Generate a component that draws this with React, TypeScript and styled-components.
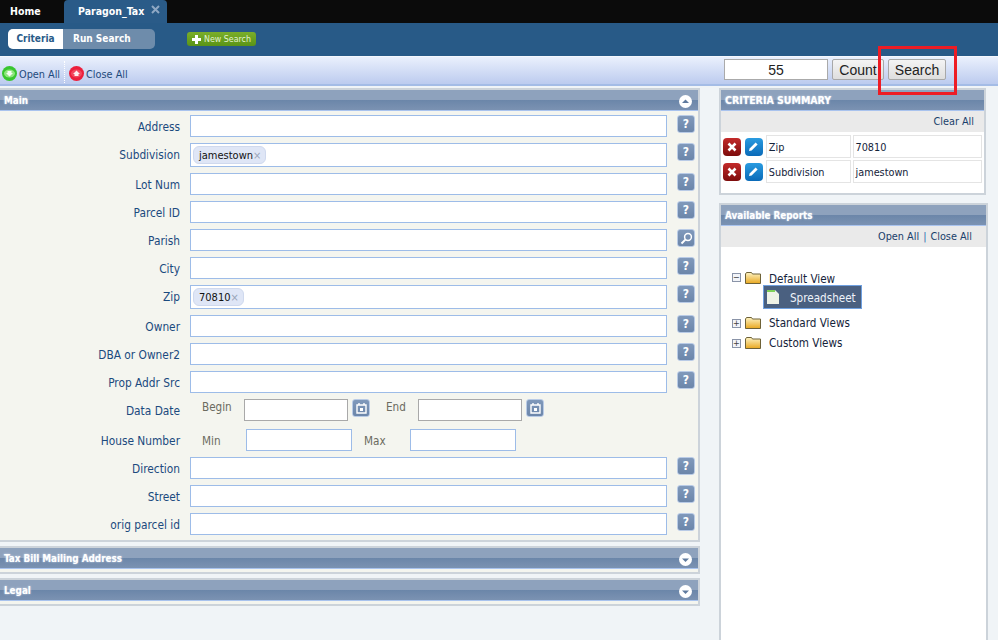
import styled, { createGlobalStyle } from "styled-components";

const Global = createGlobalStyle`
  html, body { margin: 0; padding: 0; height: 100%; }
  body {
    background: #f0f4f7;
    font-family: "DejaVu Sans Condensed", "DejaVu Sans", sans-serif;
    font-stretch: condensed;
    font-size: 11.6px;
    color: #0d3c6e;
    overflow: hidden;
  }
  * { box-sizing: border-box; }
`;

const Page = styled.div`
  position: relative;
  width: 998px;
  height: 640px;
  overflow: hidden;
`;

const TabBar = styled.div`
  display: flex;
  height: 23px;
  background: #0b0b0b;
  padding-left: 10px;
  font-size: 10.5px;
  font-weight: 700;
  color: #fff;
`;

const HomeTab = styled.div`
  width: 54px;
  line-height: 23px;
`;

const ActiveTab = styled.div`
  position: relative;
  width: 103px;
  padding-left: 14px;
  line-height: 23px;
  background: #2a5b88;
  border-radius: 4px 4px 0 0;
`;

const TabClose = styled.span`
  position: absolute;
  right: 7px;
  top: 5px;
  display: block;
  line-height: 0;
`;

const SubBar = styled.div`
  display: flex;
  align-items: flex-start;
  height: 33px;
  padding: 6px 0 0 8px;
  background: #285a87;
`;

const Pill = styled.div`
  display: flex;
  width: 147px;
  height: 20px;
  border-radius: 5px;
  overflow: hidden;
  background: #6e8cab;
  font-size: 10px;
  font-weight: 700;
  line-height: 20px;
`;

const PillOn = styled.div`
  width: 55px;
  text-align: center;
  background: #fff;
  color: #2a5b88;
`;

const PillOff = styled.div`
  padding-left: 10px;
  color: #fff;
`;

const NewSearch = styled.div`
  display: flex;
  align-items: center;
  gap: 3px;
  width: 69px;
  height: 14px;
  margin: 3px 0 0 32px;
  padding-left: 5px;
  border-radius: 3px;
  background: linear-gradient(#7aae2a, #5a9416);
  color: #e4f2d0;
  font-size: 8.8px;
  white-space: nowrap;
`;

const Toolbar = styled.div`
  display: flex;
  align-items: center;
  height: 30px;
  padding: 0 0 0 2px;
  background: linear-gradient(#eaf0fc, #bccbef);
  border-top: 1px solid #f4f7fd;
  border-bottom: 2px solid #a4bce6;
  font-size: 10.8px;
  color: #1e4a7c;
`;

const ToolLink = styled.div`
  display: flex;
  align-items: center;
  gap: 2px;
  margin-top: 6px;
`;

const ToolText = styled.span`
  padding-top: 2px;
`;

const ToolDivider = styled.div`
  width: 1px;
  height: 22px;
  margin: 3px 4px 0 4px;
  border-left: 1px dotted #fff;
`;

const Counter = styled.div`
  display: flex;
  gap: 4px;
  margin-left: auto;
  margin-right: 52px;
  margin-top: -2px;
  font-family: "Liberation Sans", Arial, sans-serif;
  font-stretch: normal;
`;

const CountBox = styled.div`
  width: 104px;
  height: 21px;
  background: #fff;
  border: 1px solid #aaa;
  color: #222;
  font-size: 14px;
  line-height: 20px;
  text-align: center;
`;

const GrayButton = styled.div<{ $w: number }>`
  width: ${({ $w }) => $w}px;
  height: 21px;
  border: 1px solid #a8a8a8;
  border-radius: 2px;
  background: linear-gradient(#f4f4f4, #dedede);
  color: #222;
  font-size: 14px;
  line-height: 20px;
  text-align: center;
`;

const Columns = styled.div`
  display: flex;
  align-items: flex-start;
  padding-top: 2px;
`;

const Left = styled.div`
  width: 700px;
`;

const Right = styled.div`
  width: 269px;
  margin-left: 19px;
`;

const Panel = styled.div`
  background: #f4f5ef;
  border: 2px solid #ccd3da;
  border-left: 0;
  margin-bottom: 4px;
`;

const Header = styled.div<{ $size?: number }>`
  display: flex;
  align-items: center;
  justify-content: space-between;
  height: 21px;
  padding: 0 6px 0 4px;
  background: linear-gradient(#8ea2bd 0, #8ea2bd 48%, #6b86a9 50%, #7b92b2 100%);
  border-bottom: 1px solid #a9c3ee;
  color: #fff;
  font-size: ${({ $size }) => $size ?? 9.8}px;
  font-weight: 700;
  text-shadow: 0 0 2px #dfe8f5;
`;

const Orb = styled.svg`
  display: block;
  margin-top: 3px;
`;

const MainBody = styled.div`
  display: flex;
  flex-direction: column;
  gap: 6px;
  padding: 4px 0 5px;
`;

const EmptyBody = styled.div`
  height: 3px;
`;

const Row = styled.div<{ $offset?: number }>`
  display: flex;
  align-items: center;
  margin-top: ${({ $offset }) => $offset ?? 0}px;
`;

const Label = styled.div<{ $tall?: boolean }>`
  width: 180px;
  margin-right: 10px;
  padding-top: ${({ $tall }) => ($tall ? 0 : 2)}px;
  font-size: 11.8px;
  text-align: right;
  color: #1b4a7e;
`;

const Field = styled.div<{ $tall?: boolean }>`
  display: flex;
  align-items: center;
  width: 477px;
  height: ${({ $tall }) => ($tall ? 24 : 22)}px;
  padding-left: 2px;
  background: #fff;
  border: 1px solid #9dbce8;
`;

const Chip = styled.div`
  display: flex;
  align-items: center;
  height: 18px;
  padding: 0 4px 0 5px;
  background: #dfe6f6;
  border: 1px solid #cfd9ee;
  border-radius: 6px;
  color: #111;
  font-size: 11px;
`;

const ChipX = styled.span`
  color: #9aa5b8;
  font-size: 11px;
`;

const TinyButton = styled.div`
  display: flex;
  align-items: center;
  justify-content: center;
  align-self: flex-start;
  width: 18px;
  height: 18px;
  margin-left: 10px;
  border: 1px solid #b9cbe6;
  border-radius: 3px;
  background: linear-gradient(#8099bb, #6c86aa);
  color: #fff;
  font-size: 12px;
  font-weight: 700;
`;

const CalButton = styled(TinyButton)`
  margin-left: 4px;
`;

const RangeLabel = styled.div<{ $w: number; $up?: boolean }>`
  width: ${({ $w }) => $w}px;
  margin-top: ${({ $up }) => ($up ? -6 : 2)}px;
  color: #6b6b60;
`;

const RangeInput = styled.div<{ $w: number; $gray?: boolean }>`
  width: ${({ $w }) => $w}px;
  height: 22px;
  background: #fff;
  border: 1px solid ${({ $gray }) => ($gray ? "#a9a9a9" : "#9dbce8")};
`;

const RangeGap = styled.div<{ $w: number }>`
  width: ${({ $w }) => $w}px;
`;

const RangeRow = styled(Row)`
  padding-left: 12px;
`;

const WhitePanel = styled.div<{ $w: number; $fill?: boolean }>`
  width: ${({ $w }) => $w}px;
  height: ${({ $fill }) => ($fill ? "440px" : "auto")};
  margin-bottom: 8px;
  background: #fff;
  border: 2px solid #ccd3da;
`;

const ActionBar = styled.div<{ $pad: number }>`
  display: flex;
  justify-content: flex-end;
  align-items: center;
  gap: 4px;
  height: 21px;
  padding-right: ${({ $pad }) => $pad}px;
  background: #eaeaea;
  color: #1a3f6b;
  font-size: 10.8px;
`;

const ActionSep = styled.span`
  color: #2a6cb0;
`;

const CriteriaList = styled.div`
  display: flex;
  flex-direction: column;
  gap: 2px;
  padding: 3px 0 10px 2px;
`;

const CriteriaRow = styled.div`
  display: flex;
  align-items: center;
`;

const IconTile = styled.div<{ $red?: boolean }>`
  display: flex;
  align-items: center;
  justify-content: center;
  width: 18px;
  height: 18px;
  margin-right: ${({ $red }) => ($red ? 4 : 3)}px;
  border-radius: 4px;
  background: ${({ $red }) =>
    $red ? "linear-gradient(#c32a2a, #7d0c0c)" : "linear-gradient(#2a9be0, #0a6ab8)"};
`;

const Cell = styled.div<{ $w: number }>`
  width: ${({ $w }) => $w}px;
  height: 23px;
  margin-right: 2px;
  padding-left: 2px;
  border: 1px solid #e4e4e4;
  color: #14233a;
  font-size: 10.8px;
  line-height: 23px;
`;

const Tree = styled.div`
  display: flex;
  flex-direction: column;
  padding: 23px 0 0 11px;
  color: #14233a;
`;

const TreeRow = styled.div<{ $offset?: number }>`
  display: flex;
  align-items: center;
  height: 20px;
  margin-top: ${({ $offset }) => $offset ?? 0}px;
`;

const TopTreeRow = styled(TreeRow)`
  height: 15px;
`;

const Toggle = styled.div`
  display: flex;
  align-items: center;
  justify-content: center;
  width: 9px;
  height: 9px;
  margin-right: 4px;
  border: 1px solid #8a94a8;
  background: #f2f4f8;
  color: #444;
  font-size: 9px;
  line-height: 7px;
`;

const TreeText = styled.span<{ $drop?: boolean }>`
  margin-left: 8px;
  padding-top: ${({ $drop }) => ($drop ? 2 : 0)}px;
`;

const Selected = styled.div`
  display: flex;
  align-items: center;
  width: 99px;
  height: 24px;
  margin-left: 31px;
  padding-left: 3px;
  background: #4a6080;
  border: 1px solid #6fa0e0;
  color: #eef3fa;
`;

const SelectedText = styled.span`
  margin-left: 11px;
  padding-top: 2px;
`;

const Highlight = styled.div`
  position: absolute;
  left: 878px;
  top: 46px;
  width: 79px;
  height: 49px;
  border: 3px solid #ed1c24;
`;

const OrbIcon = ({ up }: { up: boolean }) => (
  <Orb width="13" height="13" viewBox="0 0 13 13">
    <circle cx="6.5" cy="6.5" r="6.5" fill="#fff" />
    <path d={up ? "M3 8 6.5 4.5 10 8z" : "M3 5.5 6.5 9 10 5.5z"} fill="#5f7a9e" />
  </Orb>
);

const RoundIcon = ({ color, glow, up }: { color: string; glow: string; up: boolean }) => (
  <svg width="15" height="15" viewBox="0 0 15 15">
    <circle cx="7.5" cy="7.5" r="7.5" fill={color} />
    <ellipse cx="7.5" cy="7.5" rx="5.5" ry="4" fill={glow} />
    <path d={up ? "M4 8 7.5 4.5 11 8H9.5v2h-4V8z" : "M4 7 7.5 10.5 11 7H9.5V5h-4v2z"} fill="#fff" opacity="0.9" />
  </svg>
);

const Folder = ({ id }: { id: string }) => (
  <svg width="16" height="12" viewBox="0 0 16 12">
    <defs>
      <linearGradient id={id} x1="0" y1="0" x2="0" y2="1">
        <stop offset="0" stopColor="#fdf3c4" />
        <stop offset="1" stopColor="#e9a820" />
      </linearGradient>
    </defs>
    <path d="M0.5 2 1.5.5h5l1 1.5h8v9.5H.5z" fill={`url(#${id})`} stroke="#6e6238" />
  </svg>
);

const PageIcon = () => (
  <svg width="12" height="14" viewBox="0 0 12 14">
    <path d="M0 0h8l4 4v10H0z" fill="#eef2e6" />
    <rect x="0" y="0" width="8" height="2" fill="#7fd05a" />
  </svg>
);

const Calendar = () => (
  <svg width="11" height="11" viewBox="0 0 11 11">
    <path d="M1 2h9v8H1z" fill="none" stroke="#fff" strokeWidth="1.4" />
    <path d="M3 0v2M8 0v2" stroke="#fff" strokeWidth="1.4" />
    <rect x="4" y="5" width="3" height="3" fill="#fff" />
  </svg>
);

const Magnifier = () => (
  <svg width="13" height="13" viewBox="0 0 13 13">
    <circle cx="8" cy="5" r="3.4" fill="none" stroke="#fff" strokeWidth="1.5" />
    <path d="M5.4 7.6 1.5 11.5" stroke="#fff" strokeWidth="2" />
  </svg>
);

const Cross = () => (
  <svg width="10" height="10" viewBox="0 0 10 10">
    <path d="M1.5 1.5l7 7M8.5 1.5l-7 7" stroke="#fff" strokeWidth="2.6" />
  </svg>
);

const Pencil = () => (
  <svg width="11" height="11" viewBox="0 0 11 11">
    <path d="M1 10l.6-2.6L7.6 1.4l2 2-6 6z" fill="#fff" />
  </svg>
);

type SearchField = { label: string; chip?: string; lookup?: boolean };

const upperFields: SearchField[] = [
  { label: "Address" },
  { label: "Subdivision", chip: "jamestown" },
  { label: "Lot Num" },
  { label: "Parcel ID" },
  { label: "Parish", lookup: true },
  { label: "City" },
  { label: "Zip", chip: "70810" },
  { label: "Owner" },
  { label: "DBA or Owner2" },
  { label: "Prop Addr Src" },
];

const lowerFields: SearchField[] = [
  { label: "Direction" },
  { label: "Street" },
  { label: "orig parcel id" },
];

const FieldRow = ({ label, chip, lookup }: SearchField) => (
  <Row>
    <Label $tall={!!chip}>{label}</Label>
    <Field $tall={!!chip}>
      {chip && (
        <Chip>
          {chip}
          <ChipX>×</ChipX>
        </Chip>
      )}
    </Field>
    <TinyButton>{lookup ? <Magnifier /> : "?"}</TinyButton>
  </Row>
);

export default function App() {
  return (
    <Page>
      <Global />
      <TabBar>
        <HomeTab>Home</HomeTab>
        <ActiveTab>
          Paragon_Tax
          <TabClose>
            <svg width="9" height="9" viewBox="0 0 9 9">
              <path d="M1 1l7 7M8 1L1 8" stroke="#8fa8c4" strokeWidth="2" />
            </svg>
          </TabClose>
        </ActiveTab>
      </TabBar>
      <SubBar>
        <Pill>
          <PillOn>Criteria</PillOn>
          <PillOff>Run Search</PillOff>
        </Pill>
        <NewSearch>
          <svg width="9" height="9" viewBox="0 0 9 9">
            <path d="M3 0h3v3h3v3H6v3H3V6H0V3h3z" fill="#fff" />
          </svg>
          New Search
        </NewSearch>
      </SubBar>
      <Toolbar>
        <ToolLink>
          <RoundIcon color="#39c62f" glow="#8fe67f" up={false} />
          <ToolText>Open All</ToolText>
        </ToolLink>
        <ToolDivider />
        <ToolLink>
          <RoundIcon color="#ec1f3c" glow="#f2475e" up />
          <ToolText>Close All</ToolText>
        </ToolLink>
        <Counter>
          <CountBox>55</CountBox>
          <GrayButton $w={52}>Count</GrayButton>
          <GrayButton $w={58}>Search</GrayButton>
        </Counter>
      </Toolbar>
      <Columns>
        <Left>
          <Panel>
            <Header>
              Main
              <OrbIcon up />
            </Header>
            <MainBody>
              {upperFields.map((f) => (
                <FieldRow key={f.label} {...f} />
              ))}
              <Row>
                <Label>Data Date</Label>
                <RangeRow>
                  <RangeLabel $w={42} $up>Begin</RangeLabel>
                  <RangeInput $w={104} $gray />
                  <CalButton><Calendar /></CalButton>
                  <RangeGap $w={16} />
                  <RangeLabel $w={32} $up>End</RangeLabel>
                  <RangeInput $w={104} $gray />
                  <CalButton><Calendar /></CalButton>
                </RangeRow>
              </Row>
              <Row $offset={2}>
                <Label>House Number</Label>
                <RangeRow>
                  <RangeLabel $w={44}>Min</RangeLabel>
                  <RangeInput $w={106} />
                  <RangeGap $w={12} />
                  <RangeLabel $w={46}>Max</RangeLabel>
                  <RangeInput $w={106} />
                </RangeRow>
              </Row>
              {lowerFields.map((f) => (
                <FieldRow key={f.label} {...f} />
              ))}
            </MainBody>
          </Panel>
          <Panel>
            <Header>
              Tax Bill Mailing Address
              <OrbIcon up={false} />
            </Header>
            <EmptyBody />
          </Panel>
          <Panel>
            <Header>
              Legal
              <OrbIcon up={false} />
            </Header>
            <EmptyBody />
          </Panel>
        </Left>
        <Right>
          <WhitePanel $w={267}>
            <Header $size={10.5}>CRITERIA SUMMARY</Header>
            <ActionBar $pad={10}>Clear All</ActionBar>
            <CriteriaList>
              <CriteriaRow>
                <IconTile $red><Cross /></IconTile>
                <IconTile><Pencil /></IconTile>
                <Cell $w={85}>Zip</Cell>
                <Cell $w={130}>70810</Cell>
              </CriteriaRow>
              <CriteriaRow>
                <IconTile $red><Cross /></IconTile>
                <IconTile><Pencil /></IconTile>
                <Cell $w={85}>Subdivision</Cell>
                <Cell $w={130}>jamestown</Cell>
              </CriteriaRow>
            </CriteriaList>
          </WhitePanel>
          <WhitePanel $w={269} $fill>
            <Header>Available Reports</Header>
            <ActionBar $pad={14}>
              Open All <ActionSep>|</ActionSep> Close All
            </ActionBar>
            <Tree>
              <TopTreeRow>
                <Toggle>−</Toggle>
                <Folder id="folder-default" />
                <TreeText $drop>Default View</TreeText>
              </TopTreeRow>
              <Selected>
                <PageIcon />
                <SelectedText>Spreadsheet</SelectedText>
              </Selected>
              <TreeRow $offset={4}>
                <Toggle>+</Toggle>
                <Folder id="folder-standard" />
                <TreeText>Standard Views</TreeText>
              </TreeRow>
              <TreeRow>
                <Toggle>+</Toggle>
                <Folder id="folder-custom" />
                <TreeText>Custom Views</TreeText>
              </TreeRow>
            </Tree>
          </WhitePanel>
        </Right>
      </Columns>
      <Highlight />
    </Page>
  );
}
